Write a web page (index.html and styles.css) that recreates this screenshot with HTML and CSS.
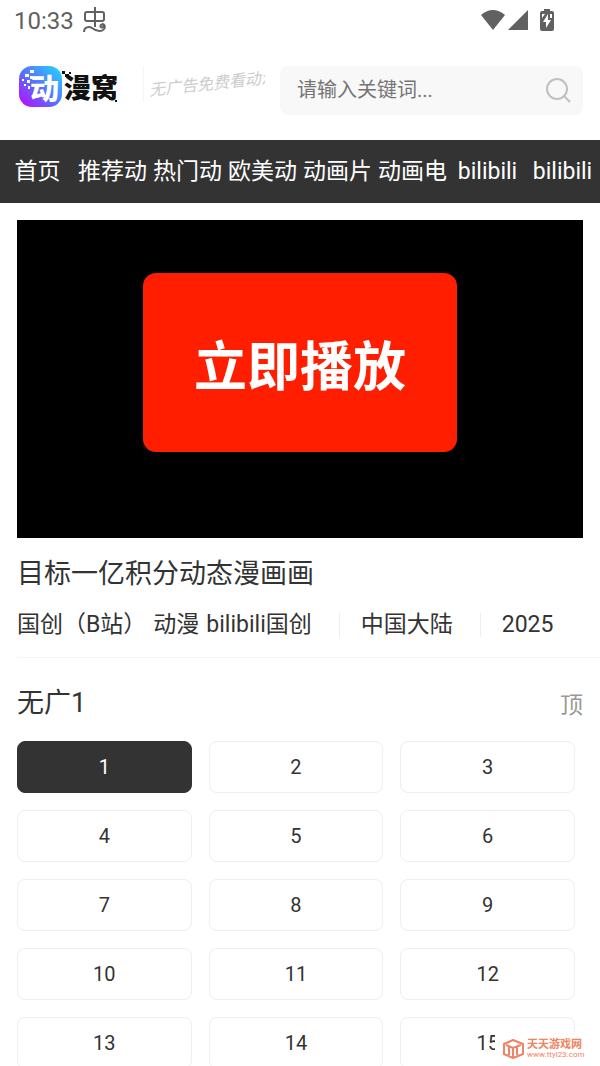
FILE: index.html
```
<!DOCTYPE html>
<html lang="zh-CN">
<head>
    <meta charset="UTF-8">
    <meta name="viewport" content="width=device-width, initial-scale=1.0">
    <title>目标一亿积分动态漫画画</title>
    <link rel="stylesheet" href="styles.css">
</head>
<body>
    <div class="status-bar">
        <span class="time">10:33</span>
        <svg class="bug-icon" width="24" height="26" viewBox="0 0 24 26" fill="none" stroke="#616161" stroke-width="2">
            <path d="M12 0V20M2 7Q2 5 4 5H19Q21 5 21 7V12Q21 14 19 14H4Q2 14 2 12Z"/>
            <path d="M1 25C1 20 6 19 9 21C13 24 17 25 20 23C23 21 22 17 19 17"/>
            <circle cx="19" cy="19" r="1.5"/>
        </svg>
        <div class="status-icons">
            <svg width="26" height="22" viewBox="0 0 26 22" fill="#616161"><path d="M13 21L1 6Q13 -4 25 6Z"/></svg>
            <svg width="20" height="22" viewBox="0 0 20 22" fill="#616161"><path d="M20 1V21H0Z"/></svg>
            <svg class="battery" width="14" height="22" viewBox="0 0 14 22">
                <path fill="#616161" d="M4 0H10V2H12Q14 2 14 4V20Q14 22 12 22H2Q0 22 0 20V4Q0 2 2 2H4Z"/>
                <path fill="#fff" d="M8 5L3 13H6V19L11 11H8ZM2 5H5L2 9ZM10 5H12V9H10Z"/>
            </svg>
        </div>
    </div>

    <header class="header">
        <a class="logo" href="#" aria-label="动漫窝">
            <svg width="102" height="46" viewBox="0 0 102 46">
                <defs>
                    <linearGradient id="logo-bg" x1="0" y1="1" x2="1" y2="0">
                        <stop offset="0" stop-color="#c800ff"/>
                        <stop offset="0.45" stop-color="#5a6cff"/>
                        <stop offset="1" stop-color="#1fdcff"/>
                    </linearGradient>
                </defs>
                <rect x="1" y="2" width="43" height="41" rx="13" fill="url(#logo-bg)"/>
                <path fill="#fff" d="M12 6h4v3h-4zM7 10h4v3H7zM12 12h3v3h-3zM4 15h2v2H4zM9 16h3v3H9zM10 22h2v3h-2zM6 20h2v2H6z"/>
                <text class="logo-mark" x="12" y="36">动</text>
                <text class="logo-name" x="46" y="34">漫窝</text>
                <path fill="#111" d="M44 7h3v3h-3zM47 10h4v3h-4zM51 8h2v2h-2zM97 36h2v2h-2zM91 34h2v2h-2z"/>
            </svg>
        </a>
        <div class="slogan"><span>无广告免费看动漫</span></div>
        <form class="search">
            <input type="text" placeholder="请输入关键词..." aria-label="搜索">
            <button type="button" aria-label="提交搜索">
                <svg width="26" height="26" viewBox="0 0 26 26" fill="none" stroke="#c0c0c0" stroke-width="2">
                    <circle cx="12" cy="12" r="10"/>
                    <path d="M19 19L25 25"/>
                </svg>
            </button>
        </form>
    </header>

    <nav class="nav">
        <a href="#">首页</a>
        <a href="#">推荐动</a>
        <a href="#">热门动</a>
        <a href="#">欧美动</a>
        <a href="#">动画片</a>
        <a href="#">动画电</a>
        <a href="#">bilibili</a>
        <a href="#">bilibili</a>
    </nav>

    <main>
        <div class="player">
            <button class="play-btn">立即播放</button>
        </div>

        <div class="info">
            <h1>目标一亿积分动态漫画画</h1>
            <div class="meta">
                <div class="tags">
                    <a href="#">国创（B站）</a>
                    <a href="#">动漫</a>
                    <a href="#">bilibili国创</a>
                </div>
                <a href="#">中国大陆</a>
                <a href="#">2025</a>
            </div>
        </div>

        <div class="source">
            <h2>无广1</h2>
            <a href="#">顶</a>
        </div>

        <div class="episodes">
            <a class="active" href="#">1</a>
            <a href="#">2</a>
            <a href="#">3</a>
            <a href="#">4</a>
            <a href="#">5</a>
            <a href="#">6</a>
            <a href="#">7</a>
            <a href="#">8</a>
            <a href="#">9</a>
            <a href="#">10</a>
            <a href="#">11</a>
            <a href="#">12</a>
            <a href="#">13</a>
            <a href="#">14</a>
            <a href="#">15</a>
        </div>
    </main>

    <div class="watermark">
        <svg width="21" height="20" viewBox="0 0 21 20" fill="none" stroke="#ee8465" stroke-width="2">
            <path d="M10 1L20 5V15L10 19L1 15V5Z"/>
            <path d="M3 6L10 9L18 6M6 8V16M10 9V18M14 8V16"/>
        </svg>
        <div>
            <b>天天游戏网</b>
            <small>www.ttyl23.com</small>
        </div>
    </div>
</body>
</html>
```

FILE: styles.css
```
* {
    margin: 0;
    padding: 0;
    box-sizing: border-box;
}

body {
    height: 100vh;
    overflow: hidden;
    background: #fff;
    color: #333;
    font-family: Roboto, "Noto Sans CJK SC", sans-serif;
}

a {
    color: inherit;
    text-decoration: none;
}

/* status bar */
.status-bar {
    display: flex;
    align-items: center;
    height: 40px;
    padding: 0 46px 0 14px;
    color: #616161;
}

.time {
    font-size: 24px;
    line-height: 40px;
    padding-top: 2px;
}

.bug-icon {
    margin-left: 9px;
}

.status-icons {
    display: flex;
    gap: 2px;
    margin-left: auto;
}

.battery {
    margin-left: 10px;
}

/* header */
.header {
    display: flex;
    align-items: center;
    height: 100px;
    padding: 0 17px 0 18px;
}

.logo {
    display: flex;
    margin-top: -6px;
}

.logo-mark {
    font-size: 29px;
    font-weight: 900;
    fill: #fff;
}

.logo-name {
    font-size: 27px;
    font-weight: 900;
    fill: #111;
}

.slogan {
    flex: none;
    width: 122px;
    margin: -12px 0 0 23px;
    padding-left: 5px;
    border-left: 1px solid #f5f5f5;
    overflow: hidden;
    white-space: nowrap;
    font-size: 16px;
    font-style: italic;
    line-height: 36px;
    color: #ccc;
}

.slogan span {
    display: inline-block;
    transform: rotate(-6deg);
}

.search {
    display: flex;
    align-items: center;
    flex: 1;
    min-width: 0;
    height: 49px;
    margin-left: 15px;
    padding: 0 12px 0 17px;
    background: #f8f8f8;
    border-radius: 8px;
}

.search input {
    flex: 1;
    min-width: 0;
    border: none;
    outline: none;
    background: none;
    font-family: inherit;
    font-size: 20px;
    color: #333;
}

.search input::placeholder {
    color: #757575;
}

.search button {
    display: flex;
    border: none;
    background: none;
    cursor: pointer;
}

/* nav */
.nav {
    display: flex;
    background: #333;
    color: #fff;
}

.nav a {
    flex: 1;
    font-size: 23px;
    line-height: 63px;
    text-align: center;
    white-space: nowrap;
}

/* player */
.player {
    display: flex;
    justify-content: center;
    margin: 17px 17px 0;
    padding: 53px 0 86px;
    background: #000;
}

.play-btn {
    padding: 56px 51px 45px;
    border: none;
    border-radius: 13px;
    background: #ff1e00;
    color: #fff;
    font-family: inherit;
    font-size: 53px;
    font-weight: bold;
    line-height: 78px;
    cursor: pointer;
}

/* info */
.info {
    margin-left: 17px;
    padding: 16px 0 15px;
    border-bottom: 1px solid #f5f5f5;
}

.info h1 {
    font-size: 27px;
    font-weight: normal;
    line-height: 40px;
}

.meta {
    display: flex;
    align-items: center;
    margin-top: 14px;
    font-size: 23px;
    line-height: 34px;
    white-space: nowrap;
}

.tags {
    display: flex;
    gap: 7px;
}

.meta > a {
    margin-left: 27px;
    padding-left: 21px;
    border-left: 1px solid #eee;
    line-height: 24px;
}

/* episodes */
.source {
    display: flex;
    align-items: center;
    justify-content: space-between;
    padding: 25px 17px 18px;
}

.source h2 {
    font-size: 27px;
    font-weight: normal;
    line-height: 40px;
}

.source a {
    font-size: 23px;
    color: #999;
}

.episodes {
    display: grid;
    grid-template-columns: repeat(3, 1fr);
    gap: 17px;
    padding: 0 25px 17px 17px;
}

.episodes a {
    border: 1px solid #eee;
    border-radius: 8px;
    font-size: 20px;
    line-height: 50px;
    text-align: center;
}

.episodes .active {
    border-color: #333;
    background: #333;
    color: #fff;
}

.watermark {
    position: fixed;
    right: 0;
    bottom: 0;
    display: flex;
    align-items: center;
    gap: 3px;
    width: 105px;
    height: 34px;
    padding-left: 8px;
    background: #fff;
    color: #ee8465;
}

.watermark svg {
    flex: none;
}

.watermark b {
    display: block;
    font-size: 11px;
    line-height: 12px;
}

.watermark small {
    display: block;
    font-size: 8px;
    line-height: 8px;
}
```
